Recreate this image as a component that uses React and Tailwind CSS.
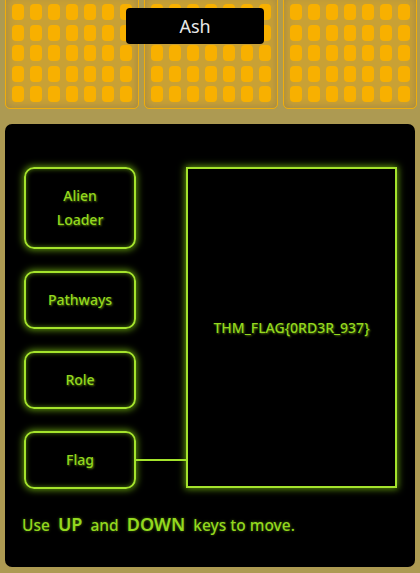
import React from 'react'

const cards = [0, 1, 2]
const cells = Array.from({ length: 35 }, (_, i) => i)

const menu = [
  { id: 'alien', label: ['Alien', 'Loader'], h: 'h-[82px]' },
  { id: 'pathways', label: ['Pathways'], h: 'h-[58px]' },
  { id: 'role', label: ['Role'], h: 'h-[58px]' },
  { id: 'flag', label: ['Flag'], h: 'h-[58px]', active: true },
]

function Card() {
  return (
    <div className="w-[134px] h-[114px] shrink-0 rounded-[5px] border border-[#f0ad0a] bg-[#c9a134] shadow-[inset_0_0_10px_rgba(150,130,80,0.9)] px-[6px] pt-[8px]">
      <div className="grid grid-cols-7 gap-x-[6px] gap-y-[4.5px]">
        {cells.map((c) => (
          <div key={c} className="h-[16px] rounded-[4px] bg-[#f8b000]" />
        ))}
      </div>
    </div>
  )
}

export default function App() {
  return (
    <div
      className="relative h-[573px] w-[420px] overflow-hidden bg-[#ad9a52]"
      style={{ fontFamily: '"Noto Sans", "Open Sans", sans-serif' }}
    >
      <div className="flex gap-[5px] pl-[5px] -mt-[5px]">
        {cards.map((c) => (
          <Card key={c} />
        ))}
      </div>

      <div className="absolute left-[126px] top-[8px] w-[138px] h-[36px] rounded-[4px] bg-black flex items-center justify-center text-[18px] text-[#e8e8e8]">
        Ash
      </div>

      <div className="mx-[5px] mt-[15px] h-[443px] rounded-[7px] bg-black pl-[19px] pt-[43px]">
        <div className="flex">
          <div className="flex flex-col gap-[22px] w-[162px]">
            {menu.map((m) => (
              <div key={m.id} className="flex items-center">
                <div
                  className={`w-[112px] ${m.h} shrink-0 rounded-[10px] border-2 border-[#a4e32c] shadow-[0_0_7px_1px_rgba(140,220,20,0.7),inset_0_0_5px_rgba(140,220,20,0.55)] flex flex-col items-center justify-center text-[14px] leading-[24px] font-medium text-[#93d81f] [text-shadow:1px_1px_2px_rgba(90,130,10,0.9)]`}
                >
                  {m.label.map((l) => (
                    <span key={l}>{l}</span>
                  ))}
                </div>
                {m.active && <div className="h-[2px] w-[50px] bg-[#a4e32c]" />}
              </div>
            ))}
          </div>
          <div className="w-[211px] h-[321px] border-2 border-[#a4e32c] shadow-[0_0_7px_1px_rgba(140,220,20,0.7)] flex items-center justify-center text-[14px] font-medium text-[#93d81f] [text-shadow:1px_1px_2px_rgba(90,130,10,0.9)]">
            THM_FLAG{'{'}0RD3R_937{'}'}
          </div>
        </div>
        <p className="mt-[22px] -ml-[2px] text-[15.5px] font-medium text-[#93d81f] [text-shadow:0_0_3px_rgba(140,220,20,0.5)]">
          Use <span className="mx-[4px] text-[18px] font-semibold">UP</span> and{' '}
          <span className="mx-[4px] text-[18px] font-semibold">DOWN</span> keys to move.
        </p>
      </div>
    </div>
  )
}
